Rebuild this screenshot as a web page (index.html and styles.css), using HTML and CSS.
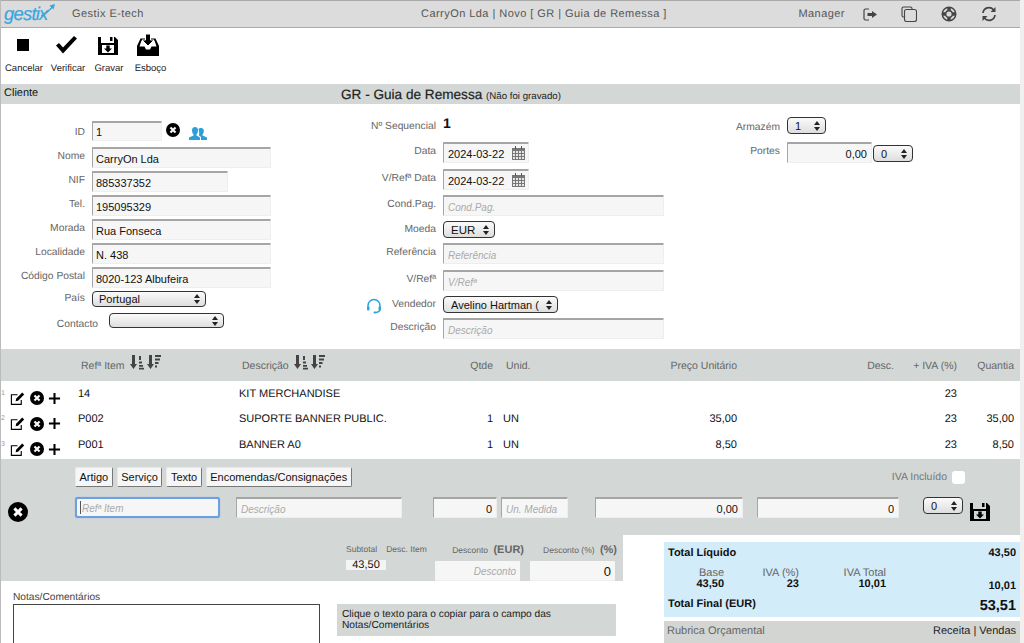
FILE: index.html
```html
<!DOCTYPE html>
<html lang="pt">

<head>
    <title>Gestix - Guia de Remessa</title>
    <meta charset="UTF-8">
    <link rel="stylesheet" href="styles.css">
</head>

<body>
    <svg class="icon-defs" width="0" height="0">
        <symbol id="i-close" viewBox="0 0 20 20">
            <circle cx="10" cy="10" r="10" fill="#000" />
            <path d="M6.400 6.400l7.200 7.200M13.600 6.400l-7.200 7.200" stroke="#fff" stroke-width="3" fill="none" />
        </symbol>
        <symbol id="i-save" viewBox="0 0 20 20">
            <path fill-rule="evenodd" fill="#000"
                d="M0 1h3v6h13V1h1l3 3v15H0zM12 1h2.500v4H12zM4 9v8h12V9zM8.300 9.500h3.400v3H14L10 16.500 6 12.500h2.300z" />
        </symbol>
        <symbol id="i-inbox" viewBox="0 0 22 22">
            <path fill="#000" d="M3.500 4.500h15L22 12v10H0V12z" />
            <path fill="#fff" d="M4.500 6.500L2.500 12.500H7.500l1.500 3h4l1.500-3h5l-2-6z" />
            <path fill="#000" stroke="#fff" stroke-width="1" d="M8.500 0h5v6H17l-6 6-6-6h3.500z" />
        </symbol>
        <symbol id="i-edit" viewBox="0 0 16 16">
            <path d="M12 9.500V14.300H1.500V4H8" stroke="#000" stroke-width="1.200" fill="none" />
            <path d="M6 10.800l.5-2.600L13 1.700l2.100 2.100-6.500 6.500z" fill="#000" />
        </symbol>
        <symbol id="i-plus" viewBox="0 0 14 14">
            <path d="M7 1v12M1 7h12" stroke="#000" stroke-width="2.200" fill="none" />
        </symbol>
        <symbol id="i-sort-a" viewBox="0 0 14 15">
            <path d="M2 0h3v9h2l-3.500 5L0 9h2z" fill="#444" />
            <path d="M9 1h2v4H9zM9 6.500h3v2H9zM9 10h4v1.800H9zM9 12.700h5v1.800H9z" fill="#444" />
        </symbol>
        <symbol id="i-sort-b" viewBox="0 0 14 15">
            <path d="M2 0h3v9h2l-3.500 5L0 9h2z" fill="#444" />
            <path d="M8 0h6v2H8zM8 3.500h5v2H8zM8 7h3.500v2H8zM8 10.500h2v2H8z" fill="#444" />
        </symbol>
    </svg>

    <div class="page">
        <header class="topbar">
            <div class="logo">gestix<svg width="14" height="13" viewBox="0 0 14 13">
                    <path d="M0 12C4 10 8 7 11.500 3" stroke="#3aa6dc" stroke-width="1.400" fill="none" />
                    <path d="M8.500 1.500L14 0l-1.500 5.500z" fill="#3aa6dc" />
                </svg></div>
            <div class="brand">Gestix E-tech</div>
            <div class="doc-title">CarryOn Lda | Novo [ GR | Guia de Remessa ]</div>
            <div class="top-right">
                <span class="user">Manager</span>
                <svg class="top-icon" width="14" height="13" viewBox="0 0 14 13">
                    <path d="M6 1H2.500A1.500 1.500 0 0 0 1 2.500v8A1.500 1.500 0 0 0 2.500 12H6" stroke="#444" stroke-width="1.200" fill="none" />
                    <path d="M4.500 5h4.500V3L14 6.500l-5 3.500V8H4.500z" fill="#444" />
                </svg>
                <svg class="top-icon" width="16" height="16" viewBox="0 0 16 16">
                    <path d="M11 3V2.500A1.500 1.500 0 0 0 9.500 1h-7A1.500 1.500 0 0 0 1 2.500v7A1.500 1.500 0 0 0 2.500 11H3" stroke="#444" stroke-width="1.100" fill="none" />
                    <rect x="3.500" y="3.500" width="12" height="12" rx="2" stroke="#444" stroke-width="1.100" fill="none" />
                </svg>
                <svg class="top-icon" width="16" height="16" viewBox="0 0 16 16">
                    <circle cx="8" cy="8" r="6.800" stroke="#444" stroke-width="1.400" fill="none" />
                    <circle cx="8" cy="8" r="3.300" stroke="#444" stroke-width="1.400" fill="none" />
                    <path d="M6.300 1.500h3.400v3.300H6.300zM6.300 11.200h3.400v3.300H6.300zM1.500 6.300h3.300v3.400H1.500zM11.200 6.300h3.300v3.400h-3.300z" fill="#444" />
                </svg>
                <svg class="top-icon" width="16" height="16" viewBox="0 0 16 16">
                    <path d="M2 7a6 6 0 0 1 10.500-3.300M14 9a6 6 0 0 1-10.500 3.300" stroke="#444" stroke-width="1.700" fill="none" />
                    <path d="M14.500 1v5h-5zM1.500 15v-5h5z" fill="#444" />
                </svg>
            </div>
        </header>

        <div class="toolbar">
            <a class="tool tool-cancel"><svg width="20" height="20" viewBox="0 0 20 20">
                    <rect x="4" y="4" width="12" height="12" fill="#000" />
                </svg>Cancelar</a>
            <a class="tool tool-check"><svg width="22" height="20" viewBox="0 0 22 20">
                    <path d="M1 10.500l3-2.500 4 4.500L19 1l3 2.500L8 18.500z" fill="#000" />
                </svg>Verificar</a>
            <a class="tool tool-save"><svg width="20" height="20">
                    <use href="#i-save" />
                </svg>Gravar</a>
            <a class="tool tool-draft"><svg width="22" height="22">
                    <use href="#i-inbox" />
                </svg>Esboço</a>
        </div>

        <div class="section-bar">
            <span class="section-name">Cliente</span>
            <span class="section-title">GR - Guia de Remessa <small>(Não foi gravado)</small></span>
        </div>

        <section class="form-cols">
            <div class="col col-left">
                <div class="field field-id">
                    <label>ID</label>
                    <input class="w-id" value="1">
                    <svg class="ic-close" width="14" height="14"><use href="#i-close" /></svg>
                    <svg class="ic-users" width="18" height="13" viewBox="0 0 18 13">
                        <path d="M6 0c2 0 3 1.500 3 3.500S8 7 7.500 7.500V8.500L11 10.500V13H0v-2.500L4.500 8.500V7.500C4 7 3 5.500 3 3.500S4 0 6 0z" fill="#2b9fd8" />
                        <path d="M12 1c1.800 0 2.800 1.300 2.800 3S14 7 13.500 7.500v1L18 10.500V13h-6v-3L10 8.500C10.500 7 10 3 9.500 2 10 1.300 11 1 12 1z" fill="#2b9fd8" />
                    </svg>
                </div>
                <div class="field"><label>Nome</label><input class="w-full" value="CarryOn Lda"></div>
                <div class="field"><label>NIF</label><input class="w-nif" value="885337352"></div>
                <div class="field"><label>Tel.</label><input class="w-full" value="195095329"></div>
                <div class="field"><label>Morada</label><input class="w-full" value="Rua Fonseca"></div>
                <div class="field"><label>Localidade</label><input class="w-full" value="N. 438"></div>
                <div class="field"><label>Código Postal</label><input class="w-full" value="8020-123 Albufeira"></div>
                <div class="field field-pais"><label>País</label>
                    <select class="w-pais">
                        <option>Portugal</option>
                    </select>
                </div>
                <div class="field field-contacto"><label>Contacto</label>
                    <select class="w-contacto">
                        <option></option>
                    </select>
                </div>
            </div>

            <div class="col col-mid">
                <div class="field field-seq"><label>Nº Sequencial</label><b>1</b></div>
                <div class="field tall"><label>Data</label><input class="w-date" value="2024-03-22"></div>
                <div class="field"><label>V/Refª Data</label><input class="w-date" value="2024-03-22"></div>
                <div class="field"><label>Cond.Pag.</label><input class="w-text" placeholder="Cond.Pag."></div>
                <div class="field short"><label>Moeda</label>
                    <select class="w-moeda">
                        <option>EUR</option>
                    </select>
                </div>
                <div class="field tall"><label>Referência</label><input class="w-text" placeholder="Referência"></div>
                <div class="field"><label>V/Refª</label><input class="w-text" placeholder="V/Refª"></div>
                <div class="field short field-vendedor">
                    <svg class="ic-headset" width="16" height="16" viewBox="0 0 16 16">
                        <path d="M2 10V7.500a6 6 0 0 1 12 0V10M14 10.500c0 2.500-2 4-5 4" stroke="#2ba4e0" stroke-width="1.500" fill="none" />
                        <rect x="1" y="8.500" width="2.500" height="4" rx="1" fill="#2ba4e0" />
                        <rect x="12.500" y="8.500" width="2.500" height="4" rx="1" fill="#2ba4e0" />
                        <rect x="7.500" y="13.500" width="2.500" height="2" rx="1" fill="#2ba4e0" />
                    </svg>
                    <label>Vendedor</label>
                    <select class="w-vendedor">
                        <option>Avelino Hartman (Vendas)</option>
                    </select>
                </div>
                <div class="field"><label>Descrição</label><input class="w-text" placeholder="Descrição"></div>
            </div>

            <div class="col col-right">
                <div class="field short field-armazem"><label>Armazém</label>
                    <select class="w-small">
                        <option>1</option>
                    </select>
                </div>
                <div class="field"><label>Portes</label>
                    <input class="w-portes num" value="0,00">
                    <select class="w-small-b">
                        <option>0</option>
                    </select>
                </div>
            </div>
        </section>

        <div class="item-row item-head">
            <span></span>
            <span class="head-sort">Refª Item <svg width="14" height="15"><use href="#i-sort-a" /></svg><svg width="14" height="15"><use href="#i-sort-b" /></svg></span>
            <span class="head-sort">Descrição <svg width="14" height="15"><use href="#i-sort-a" /></svg><svg width="14" height="15"><use href="#i-sort-b" /></svg></span>
            <span class="right">Qtde</span>
            <span class="unid">Unid.</span>
            <span class="right">Preço Unitário</span>
            <span class="right">Desc.</span>
            <span class="right">+ IVA (%)</span>
            <span class="right">Quantia</span>
        </div>

        <div class="items">
            <div class="item-row">
                <span class="actions"><i>1</i><svg width="15" height="15"><use href="#i-edit" /></svg><svg width="14" height="14"><use href="#i-close" /></svg><svg width="13" height="13"><use href="#i-plus" /></svg></span>
                <span>14</span><span>KIT MERCHANDISE</span><span class="right"></span><span class="unid"></span>
                <span class="right"></span><span class="right"></span><span class="right">23</span><span class="right"></span>
            </div>
            <div class="item-row">
                <span class="actions"><i>2</i><svg width="15" height="15"><use href="#i-edit" /></svg><svg width="14" height="14"><use href="#i-close" /></svg><svg width="13" height="13"><use href="#i-plus" /></svg></span>
                <span>P002</span><span>SUPORTE BANNER PUBLIC.</span><span class="right">1</span><span class="unid">UN</span>
                <span class="right">35,00</span><span class="right"></span><span class="right">23</span><span class="right">35,00</span>
            </div>
            <div class="item-row">
                <span class="actions"><i>3</i><svg width="15" height="15"><use href="#i-edit" /></svg><svg width="14" height="14"><use href="#i-close" /></svg><svg width="13" height="13"><use href="#i-plus" /></svg></span>
                <span>P001</span><span>BANNER A0</span><span class="right">1</span><span class="unid">UN</span>
                <span class="right">8,50</span><span class="right"></span><span class="right">23</span><span class="right">8,50</span>
            </div>
        </div>

        <div class="add-area">
            <div class="add-tabs">
                <button>Artigo</button>
                <button>Serviço</button>
                <button>Texto</button>
                <button>Encomendas/Consignações</button>
                <span class="iva-incl">IVA Incluído<span class="check"></span></span>
            </div>
            <div class="add-inputs">
                <svg class="add-close" width="20" height="20"><use href="#i-close" /></svg>
                <input class="in-ref focus" placeholder="Refª Item">
                <input class="in-desc" placeholder="Descrição">
                <input class="in-qty num" value="0">
                <input class="in-un" placeholder="Un. Medida">
                <input class="in-price num" value="0,00">
                <input class="in-disc num" value="0">
                <select class="in-iva">
                    <option>0</option>
                </select>
                <svg class="add-save" width="20" height="20"><use href="#i-save" /></svg>
            </div>
        </div>

        <div class="bottom">
            <div class="bottom-left">
                <div class="subtotals">
                    <div class="sub-col sub-total">
                        <div class="sub-heads"><span>Subtotal</span><span>Desc. Item</span></div>
                        <div class="sub-value">43,50</div>
                    </div>
                    <div class="sub-col sub-eur">
                        <div class="sub-head">Desconto <b>(EUR)</b></div>
                        <input class="in-desconto" placeholder="Desconto">
                    </div>
                    <div class="sub-col sub-pct">
                        <div class="sub-head">Desconto (%) <b>(%)</b></div>
                        <input class="in-desconto num" value="0">
                    </div>
                </div>
                <div class="notes">
                    <div class="notes-left">
                        <label>Notas/Comentários</label>
                        <textarea></textarea>
                    </div>
                    <div class="hint">Clique o texto para o copiar para o campo das Notas/Comentários</div>
                </div>
            </div>

            <div class="bottom-right">
                <div class="totals">
                    <div class="tot-line"><b>Total Líquido</b><b>43,50</b></div>
                    <div class="tax-line">
                        <div class="tax tax-base">Base<b>43,50</b></div>
                        <div class="tax tax-pct">IVA (%)<b>23</b></div>
                        <div class="tax tax-total">IVA Total<b>10,01</b></div>
                        <b class="tax-sum">10,01</b>
                    </div>
                    <div class="tot-line tot-final"><b>Total Final (EUR)</b><b class="grand">53,51</b></div>
                </div>
                <div class="rubrica"><span>Rubrica Orçamental</span><span class="rubrica-val">Receita | Vendas</span></div>
            </div>
        </div>
    </div>
</body>

</html>
```

FILE: styles.css
```css
html {
    background: #f0f0f0;
}

body {
    margin: 0;
    height: 643px;
    overflow: hidden;
    font-family: "Liberation Sans", Arial, sans-serif;
    font-size: 11px;
    color: #111;
    text-rendering: geometricPrecision;
}

.icon-defs {
    position: absolute;
}

.page {
    width: 1019px;
    border-left: 1px solid #bbb;
    background: #fff;
    height: 643px;
}

/* top bar */
.topbar {
    height: 26px;
    display: flex;
    align-items: center;
    background: #dcdcdc;
    border-top: 1px solid #a9a9a9;
    border-bottom: 1px solid #a9a9a9;
    color: #555;
    letter-spacing: 0.45px;
}

.logo {
    width: 71px;
    padding-left: 3px;
    box-sizing: border-box;
    display: flex;
    align-items: flex-start;
    font-size: 18.500px;
    font-style: italic;
    letter-spacing: -0.8px;
    color: #3aa6dc;
    -webkit-text-stroke: 0.2px #3aa6dc;
}

.logo svg {
    margin: 1px 0 0 -7px;
}

.brand {
    width: 349px;
    font-size: 11px;
}

.doc-title {
    font-size: 11px;
}

.top-right {
    margin-left: auto;
    display: flex;
    align-items: center;
    padding-right: 23px;
}

.user {
    margin-right: 18px;
}

.top-icon {
    margin-right: 24px;
}

.top-icon:last-child {
    margin-right: 0;
}

/* toolbar */
.toolbar {
    height: 56px;
    display: flex;
    background: #fff;
}

.tool {
    display: flex;
    flex-direction: column;
    align-items: center;
    justify-content: space-between;
    box-sizing: border-box;
    height: 46px;
    padding-top: 7px;
    font-size: 9.500px;
    color: #222;
}

.tool svg {
    flex: none;
}

.tool-cancel {
    margin-left: 4px;
    width: 38px;
}

.tool-cancel svg {
    margin-right: 3px;
}

.tool-check {
    margin-left: 8px;
    width: 34px;
}

.tool-check svg {
    margin-right: 5px;
}

.tool-save {
    margin-left: 10px;
    width: 28px;
    padding-top: 8px;
}

.tool-save svg {
    margin-right: 3px;
}

.tool-draft {
    margin-left: 12px;
    width: 31px;
    padding-top: 6px;
}

.tool-draft svg {
    margin-right: 5px;
}

/* grey section bar */
.section-bar {
    height: 20px;
    background: #d3d8d6;
    display: flex;
    align-items: center;
}

.section-name {
    width: 340px;
    padding-left: 3px;
    box-sizing: border-box;
    font-size: 11px;
    margin-top: -2px;
}

.section-title {
    font-size: 13.600px;
    color: #222;
    -webkit-text-stroke: 0.2px #222;
}

.section-title small {
    font-size: 9.700px;
    -webkit-text-stroke: 0;
}

/* client form */
.form-cols {
    height: 245px;
    display: grid;
    grid-template-columns: 339px 340px 1fr;
}

.col {
    display: flex;
    flex-direction: column;
}

.col-left {
    padding-top: 17px;
    gap: 3px;
}

.col-mid {
    padding-top: 14px;
    gap: 5px;
}

.col-right {
    padding-top: 13px;
    gap: 8px;
}

.field {
    display: flex;
    align-items: flex-start;
    height: 21px;
    flex: none;
}

.field label {
    text-align: right;
    color: #666;
    font-size: 10.300px;
    line-height: 19px;
    margin-right: 7px;
    white-space: nowrap;
    flex: none;
}

.col-left label {
    width: 84px;
}

.col-left input {
    padding-left: 3px;
}

.col-mid label {
    width: 96px;
}

.col-right label {
    width: 100px;
}

.field-id {
    height: 20px;
    margin-bottom: 3px;
}

.field-id label {
    line-height: 24px;
}

.field-pais {
    height: 16px;
    margin-bottom: 3px;
}

.field-pais label {
    line-height: 16px;
}

.field-contacto {
    height: 15px;
}

.col-left .field-contacto label {
    width: 97px;
    margin-right: 11px;
    line-height: 24px;
}

.field-seq {
    height: 19px;
}

.field-seq b {
    font-size: 14px;
    line-height: 16px;
    margin-top: -3px;
}

.field-seq label {
    line-height: 18px;
}

.tall {
    height: 22px;
}

.short {
    height: 17px;
}

.short label {
    line-height: 18px;
}

.field-armazem label {
    line-height: 22px;
}

.field-vendedor {
    position: relative;
}

.ic-headset {
    position: absolute;
    left: 26px;
    top: 2px;
}

.ic-close {
    margin: 2px 0 0 4px;
}

.ic-users {
    margin: 6px 0 0 9px;
}

input,
textarea {
    box-sizing: border-box;
    font-family: "Liberation Sans", Arial, sans-serif;
    font-size: 11px;
    color: #111;
    height: 21px;
    padding: 1px 4px 0;
    background: #f6f6f6;
    border: 1px solid #eee;
    border-top: 2px solid #a5a5a5;
    border-left: 1px solid #a5a5a5;
    border-radius: 1px;
    outline: none;
}

input::placeholder {
    color: #aaa;
    font-style: italic;
    font-size: 10px;
}

.num {
    text-align: right;
}

select {
    appearance: none;
    -webkit-appearance: none;
    box-sizing: border-box;
    height: 17px;
    padding: 0 14px 0 6px;
    font-family: "Liberation Sans", Arial, sans-serif;
    font-size: 11px;
    color: #111;
    border: 1px solid #333;
    border-radius: 4px;
    background-color: #eee;
    background-image: url("data:image/svg+xml,%3Csvg xmlns='http://www.w3.org/2000/svg' width='6' height='10'%3E%3Cpath d='M3 0l3 4H0zM3 10l3-4H0z' fill='%23222'/%3E%3C/svg%3E"), linear-gradient(#fafafa, #dedede);
    background-repeat: no-repeat;
    background-position: right 5px center, 0 0;
    outline: none;
}

.w-id {
    width: 70px;
    height: 20px;
}

.w-full {
    width: 179px;
}

.w-nif {
    width: 136px;
}

.w-pais {
    width: 114px;
    height: 16px;
}

.w-contacto {
    width: 115px;
    height: 15px;
}

.w-date {
    width: 86px;
    height: 21px;
    background-image: url("data:image/svg+xml,%3Csvg xmlns='http://www.w3.org/2000/svg' width='13' height='14'%3E%3Cpath d='M0 2h13v12H0z' fill='%23777'/%3E%3Cpath d='M3 0h1v3H3zM9 0h1v3H9z' fill='%23555'/%3E%3Cpath d='M1 5h2v2H1zM4 5h2v2H4zM7 5h2v2H7zM10 5h2v2h-2zM1 8h2v2H1zM4 8h2v2H4zM7 8h2v2H7zM10 8h2v2h-2zM1 11h2v2H1zM4 11h2v2H4zM7 11h2v2H7zM10 11h2v2h-2z' fill='%23e6e6e6'/%3E%3C/svg%3E");
    background-repeat: no-repeat;
    background-position: right 3px center;
}

.w-text {
    width: 221px;
}

.w-moeda {
    width: 52px;
    font-size: 11.500px;
    padding-left: 7px;
}

.w-vendedor {
    width: 115px;
    padding: 0 18px 0 7px;
}

.w-small {
    width: 39px;
    padding-left: 7px;
}

.w-portes {
    width: 85px;
}

.w-small-b {
    width: 40px;
    margin: 3px 0 0 1px;
    padding-left: 7px;
}

/* item table */
.item-row {
    display: grid;
    grid-template-columns: 77px 161px 200px 54px 60px 184px 157px 63px 57px;
    padding-right: 6px;
    align-items: center;
    box-sizing: border-box;
}

.right {
    text-align: right;
}

.unid {
    padding-left: 10px;
}

.item-head {
    height: 32px;
    padding-top: 2px;
    background: #d3d8d6;
    color: #666;
    font-size: 10.500px;
}

.item-head .unid {
    padding-left: 13px;
}

.head-sort {
    padding-left: 3px;
    display: flex;
    align-items: center;
}

.head-sort svg {
    margin-left: 3px;
    margin-top: -8px;
}

.head-sort svg:first-of-type {
    margin-left: 5px;
}

.items {
    height: 78px;
}

.items .item-row {
    height: 25.500px;
    padding-bottom: 0.500px;
}

.actions {
    position: relative;
    display: flex;
    align-items: center;
    gap: 4.500px;
    padding-left: 9px;
    margin-top: 9px;
}

.actions i {
    position: absolute;
    left: 0;
    top: -1px;
    font-size: 7px;
    font-style: normal;
    color: #999;
}

/* add line */
.add-area {
    height: 76px;
    background: #d3d8d6;
    box-sizing: border-box;
    padding-top: 8px;
}

.add-tabs {
    display: flex;
    gap: 4px;
    padding-left: 74px;
    padding-right: 55px;
    height: 20px;
    align-items: center;
}

button {
    height: 20px;
    padding: 0 3.500px;
    font-family: "Liberation Sans", Arial, sans-serif;
    font-size: 11px;
    color: #111;
    background: #f6f6f6;
    border: 1px solid #e8e8e8;
    border-right: 1px solid #777;
    border-bottom: 1px solid #777;
    border-radius: 2px;
}

.iva-incl {
    margin-left: auto;
    display: flex;
    align-items: center;
    gap: 5px;
    color: #777;
    font-size: 10.500px;
}

.check {
    width: 13px;
    height: 13px;
    background: #fff;
    border-radius: 3px;
}

.add-inputs {
    display: flex;
    align-items: flex-start;
    margin-top: 10px;
    padding-left: 7px;
}

.add-close {
    margin-top: 5px;
}

.in-ref {
    width: 145px;
    margin-left: 47px;
}

.focus {
    border: 2px solid #6d9fe3;
    padding-left: 5px;
    background: linear-gradient(#555, #555) no-repeat 3px 2px / 1px 13px, #f6f6f6;
    border-radius: 3px;
    box-shadow: 0 0 1px #6d9fe3;
}

.in-desc {
    width: 166px;
    margin-left: 16px;
}

.in-qty {
    width: 64px;
    margin-left: 31px;
}

.in-un {
    width: 67px;
    margin-left: 4px;
}

.in-price {
    width: 148px;
    margin-left: 27px;
}

.in-disc {
    width: 142px;
    margin-left: 14px;
}

.in-iva {
    width: 40px;
    margin-left: 24px;
    padding-left: 7px;
}

.add-save {
    margin: 5px 0 0 7px;
}

/* bottom half */
.bottom {
    display: grid;
    grid-template-columns: 622px 1fr;
}

.subtotals {
    height: 46px;
    background: #d3d8d6;
    display: flex;
    box-sizing: border-box;
    padding: 9px 0 0 345px;
    color: #666;
    font-size: 8.500px;
}

.sub-col {
    display: flex;
    flex-direction: column;
    gap: 1px;
}

.sub-heads {
    display: flex;
    gap: 9px;
    height: 15px;
    white-space: nowrap;
}

.sub-total {
    width: 89px;
}

.sub-value {
    width: 40px;
    height: 10px;
    line-height: 10px;
    background: #f4f4f4;
    color: #111;
    font-size: 11px;
    text-align: center;
}

.sub-eur {
    width: 95px;
}

.sub-pct {
    width: 90px;
}

.sub-head {
    height: 16px;
    text-align: right;
    white-space: nowrap;
}

.sub-eur .sub-head {
    width: 89px;
}

.sub-pct .sub-head {
    width: 87px;
}

.sub-head b {
    font-size: 11px;
    margin-left: 3px;
}

.in-desconto {
    width: 85px;
    height: 20px;
    background: #f6f6f6;
    border: none;
    border-bottom: 1px solid #eee;
}

.sub-pct .in-desconto {
    font-size: 13px;
}

.in-desconto::placeholder {
    font-size: 10px;
    text-align: right;
}

.notes {
    display: flex;
    padding: 10px 0 0 12px;
    gap: 17px;
}

.notes-left {
    display: flex;
    flex-direction: column;
    width: 307px;
}

.notes-left label {
    font-size: 10.200px;
    color: #444;
    height: 13px;
    padding-top: 1px;
    box-sizing: border-box;
}

textarea {
    width: 307px;
    height: 60px;
    background: #fff;
    border: 1px solid #444;
    border-radius: 0;
    resize: none;
}

.hint {
    width: 279px;
    height: 32px;
    margin-top: 13px;
    box-sizing: border-box;
    padding: 6px 5px 0;
    background: #d3d8d6;
    font-size: 10.200px;
    line-height: 10.500px;
    color: #222;
}

.bottom-right {
    padding: 7px 0 0 41px;
}

.totals {
    height: 75px;
    background: #d3ecf9;
    box-sizing: border-box;
    padding: 4px 4px 0 4px;
}

.tot-line {
    display: flex;
    justify-content: space-between;
    height: 14px;
    line-height: 14px;
    font-size: 11px;
    color: #111;
}

.tax-line {
    display: flex;
    height: 29px;
    margin-top: 8px;
    color: #666;
    font-size: 11px;
    line-height: 11px;
}

.tax {
    display: flex;
    flex-direction: column;
    align-items: flex-end;
}

.tax b {
    color: #111;
}

.tax-base {
    width: 56px;
}

.tax-pct {
    width: 75px;
}

.tax-total {
    width: 87px;
}

.tax-sum {
    margin-left: auto;
    margin-top: 13px;
    color: #111;
}

.tot-final {
    align-items: center;
}

.grand {
    font-size: 14.500px;
    margin-top: 4px;
}

.rubrica {
    height: 30px;
    margin-top: 4px;
    background: #d3d5d3;
    display: flex;
    justify-content: space-between;
    padding: 4px 4px 0 3px;
    box-sizing: border-box;
    color: #666;
    font-size: 11px;
}

.rubrica-val {
    color: #222;
}
```
